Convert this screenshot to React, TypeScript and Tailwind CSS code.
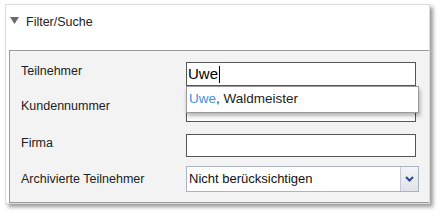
import React from 'react';

const font = { fontFamily: '"Liberation Sans", Arial, sans-serif' };

function Row({ label, pt, children, mb }: { label: string; pt: string; children: React.ReactNode; mb: string }) {
  return (
    <div className={`flex items-start ${mb}`}>
      <div className={`w-[165px] shrink-0 text-[12.5px] leading-4 text-[#222] ${pt}`}>{label}</div>
      {children}
    </div>
  );
}

export default function App() {
  return (
    <div className="w-[444px] h-[218px] bg-white pl-[5px] pt-[4px]" style={font}>
      <div className="w-[425px] h-[200px] border border-[#dcdcdc] bg-white shadow-[3px_3px_4px_rgba(0,0,0,0.4)] flex flex-col">
        {/* header */}
        <div className="h-[45px] flex items-start pt-[9px] pl-[4px] gap-[7px]">
          <svg width="9" height="8" viewBox="0 0 9 8" className="mt-[3px]">
            <polygon points="0,0 9,0 4.5,7" fill="#6b6b6b" />
          </svg>
          <span className="text-[12.5px] leading-4 text-[#222]">Filter/Suche</span>
        </div>

        {/* fieldset */}
        <div className="flex-1 ml-[3px] border-t border-l border-b border-[#9a9a9a] bg-[#f3f3f3] pl-[11px] pt-[11px]">
          <Row label="Teilnehmer" pt="pt-[1px]" mb="mb-[12px]">
            <div className="relative">
              <div className="w-[230px] h-[24px] border border-[#555] bg-white flex items-center pl-[1px] text-[15px] text-black">
                Uwe<span className="w-px h-[17px] bg-black ml-px" />
              </div>
              <div className="absolute left-0 top-[24px] z-10 w-[233px] h-[27px] border border-[#9a9a9a] bg-white shadow-[1px_3px_4px_rgba(0,0,0,0.3)] flex items-center pl-[2px] text-[13.5px]">
                <span className="text-[#3d8fe6]">Uwe</span>
                <span className="text-[#222]">, Waldmeister</span>
              </div>
            </div>
          </Row>
          <Row label="Kundennummer" pt="" mb="mb-[12px]">
            <div className="w-[230px] h-[24px] border border-[#555] bg-white" />
          </Row>
          <Row label="Firma" pt="pt-[1px]" mb="mb-[9px]">
            <div className="w-[230px] h-[23px] border border-[#555] bg-white" />
          </Row>
          <Row label="Archivierte Teilnehmer" pt="pt-[5px]" mb="">
            <div className="w-[233px] h-[26px] border border-[#a9b3c2] bg-white flex items-stretch">
              <div className="flex-1 flex items-center pl-[2px] text-[13px] text-[#111]">Nicht berücksichtigen</div>
              <div className="w-[18px] border-l border-[#c4cbd6] bg-gradient-to-b from-[#f4f5f8] to-[#dfe2e8] flex items-center justify-center">
                <svg width="9" height="6" viewBox="0 0 9 6">
                  <polyline points="1,1 4.5,4.5 8,1" fill="none" stroke="#2b4a85" strokeWidth="2" />
                </svg>
              </div>
            </div>
          </Row>
        </div>
      </div>
    </div>
  );
}
